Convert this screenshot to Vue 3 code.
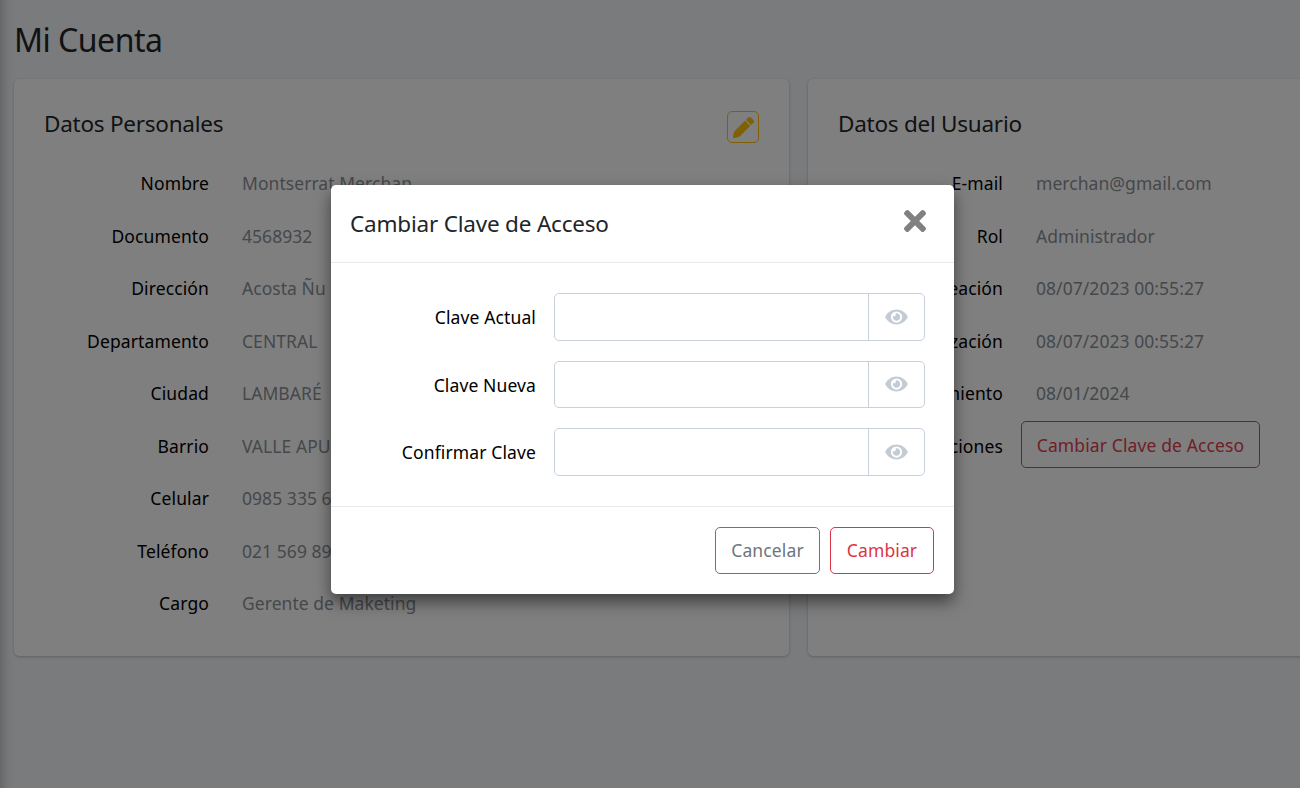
<script setup>
const left = [
  ['Nombre', 'Montserrat Merchan'],
  ['Documento', '4568932'],
  ['Dirección', 'Acosta Ñu c/ Cerro Corá'],
  ['Departamento', 'CENTRAL'],
  ['Ciudad', 'LAMBARÉ'],
  ['Barrio', 'VALLE APU\'A'],
  ['Celular', '0985 335 689'],
  ['Teléfono', '021 569 890'],
  ['Cargo', 'Gerente de Maketing'],
]
const right = [
  ['E-mail', 'merchan@gmail.com'],
  ['Rol', 'Administrador'],
  ['Fecha de Creación', '08/07/2023 00:55:27'],
  ['Última Actualización', '08/07/2023 00:55:27'],
  ['Fecha de Vencimiento', '08/01/2024'],
]
const fields = ['Clave Actual', 'Clave Nueva', 'Confirmar Clave']
const eye = 'M572.52 241.4C518.29 135.59 410.93 64 288 64S57.68 135.64 3.48 241.41a32.35 32.35 0 0 0 0 29.19C57.71 376.41 165.07 448 288 448s230.32-71.64 284.52-177.41a32.35 32.35 0 0 0 0-29.19zM288 400a144 144 0 1 1 144-144 143.93 143.93 0 0 1-144 144zm0-240a95.31 95.31 0 0 0-25.31 3.79 47.85 47.85 0 0 1-66.9 66.9A95.78 95.78 0 1 0 288 160z'
</script>

<template>
  <div class="page">
    <h1 class="title">Mi Cuenta</h1>
    <div class="cards">
      <section class="card">
        <div class="card-head">
          <h2>Datos Personales</h2>
          <button class="edit" type="button" aria-label="Editar">
            <svg viewBox="0 0 512 512" width="21" height="21"><path fill="currentColor" d="M497.9 142.1l-46.1 46.1c-4.7 4.7-12.3 4.7-17 0l-111-111c-4.7-4.7-4.7-12.3 0-17l46.1-46.1c18.7-18.7 49.1-18.7 67.9 0l60.1 60.1c18.8 18.7 18.8 49.1 0 67.9zM284.2 99.8L21.6 362.4.4 483.9c-2.9 16.4 11.4 30.6 27.8 27.8l121.5-21.3 262.6-262.6c4.7-4.7 4.7-12.3 0-17l-111-111c-4.8-4.7-12.4-4.7-17.1 0z"/></svg>
          </button>
        </div>
        <dl class="rows">
          <div v-for="r in left" :key="r[0]" class="row">
            <dt>{{ r[0] }}</dt>
            <dd>{{ r[1] }}</dd>
          </div>
        </dl>
      </section>
      <section class="card">
        <div class="card-head">
          <h2>Datos del Usuario</h2>
        </div>
        <dl class="rows">
          <div v-for="r in right" :key="r[0]" class="row">
            <dt>{{ r[0] }}</dt>
            <dd>{{ r[1] }}</dd>
          </div>
          <div class="row row-btn">
            <dt>Acciones</dt>
            <dd><button class="btn btn-red change" type="button">Cambiar Clave de Acceso</button></dd>
          </div>
        </dl>
      </section>
    </div>
    <div class="backdrop"></div>
    <div class="modal">
      <header class="m-head">
        <h3>Cambiar Clave de Acceso</h3>
        <svg class="close" viewBox="0 80 352 352" width="22" height="22"><path fill="currentColor" d="M242.72 256l100.07-100.07c12.28-12.28 12.28-32.19 0-44.48l-22.24-22.24c-12.28-12.28-32.19-12.28-44.48 0L176 189.28 75.93 89.21c-12.28-12.28-32.19-12.28-44.48 0L9.21 111.45c-12.28 12.28-12.28 32.19 0 44.48L109.28 256 9.21 356.07c-12.28 12.28-12.28 32.19 0 44.48l22.24 22.24c12.28 12.28 32.2 12.28 44.48 0L176 322.72l100.07 100.07c12.28 12.28 32.2 12.28 44.48 0l22.24-22.24c12.28-12.28 12.28-32.19 0-44.48L242.72 256z"/></svg>
      </header>
      <div class="m-body">
        <div v-for="f in fields" :key="f" class="field">
          <label>{{ f }}</label>
          <div class="group">
            <input type="password" />
            <span class="addon">
              <svg viewBox="0 0 576 512" width="23" height="20"><path fill="currentColor" :d="eye"/></svg>
            </span>
          </div>
        </div>
      </div>
      <footer class="m-foot">
        <button class="btn btn-grey" type="button">Cancelar</button>
        <button class="btn btn-red solid" type="button">Cambiar</button>
      </footer>
    </div>
  </div>
</template>

<style>
html, body { margin: 0; height: 100%; overflow: hidden; }
</style>

<style scoped>
* { box-sizing: border-box; }
.page {
  position: relative;
  height: 788px;
  width: 1300px;
  overflow: hidden;
  background: #f4f6f9;
  padding: 14px 0 0 14px;
  font-family: "Noto Sans", sans-serif;
  font-size: 17.5px;
  letter-spacing: 0.12px;
  line-height: 27px;
  color: #212529;
  box-shadow: inset 14px 0 12px -12px rgba(0, 0, 0, .25);
}
.title {
  margin: 0 0 14px;
  font-size: 32px;
  font-weight: 400;
  line-height: 51px;
  letter-spacing: -0.5px;
}
.cards { display: flex; gap: 19px; width: 1569px; }
.card {
  flex: 0 0 775px;
  height: 577px;
  padding: 30px;
  background: #fff;
  border-radius: 5px;
  box-shadow: 0 0 1px rgba(0,0,0,.125), 0 1px 3px rgba(0,0,0,.2);
}
.card-head {
  display: flex;
  justify-content: space-between;
  align-items: center;
  height: 32px;
  margin: 2px 0 14px;
}
.card-head h2 { margin: 0 0 6px; font-size: 22.5px; font-weight: 400; line-height: 32px; letter-spacing: -0.25px; }
.edit {
  width: 32px;
  height: 32px;
  padding: 0;
  display: flex;
  align-items: center;
  justify-content: center;
  background: transparent;
  border: 1px solid #ffc107;
  border-radius: 5px;
  color: #ffc107;
}
.rows { margin: 0; padding-top: .25px; }
.row { display: flex; height: 52.5px; align-items: center; }
.row dt { width: 165px; text-align: right; white-space: nowrap; direction: rtl; color: #000; font-weight: 400; }
.row dd { margin: 0 0 0 33px; color: #8b9196; white-space: nowrap; letter-spacing: 0.05px; }
.row-btn dd { margin-left: 18px; display: flex; padding-bottom: 3px; }
.btn {
  height: 47px;
  padding: 0 15px;
  background: transparent;
  border: 1px solid;
  border-radius: 5px;
  font: inherit;
  letter-spacing: inherit;
}
.btn-red { color: #dc3545; border-color: #dc3545; }
.btn-grey { color: #6c757d; border-color: #6c757d; }
.change {
  width: 239px;
  padding: 2px 0 0;
  letter-spacing: 0.12px;
  border-color: #e8404f;
  color: #e0404e;
}
.backdrop { position: absolute; inset: 0; background: rgba(0, 0, 0, .5); }
.modal {
  position: absolute;
  left: 331px;
  top: 185px;
  width: 623px;
  height: 409px;
  background: #fff;
  border-radius: 5px;
  box-shadow: 0 8px 16px rgba(0, 0, 0, .5);
  display: flex;
  flex-direction: column;
}
.m-head {
  height: 78px;
  flex: none;
  padding: 0 28px 0 19px;
  display: flex;
  align-items: center;
  justify-content: space-between;
  border-bottom: 1px solid #e9ecef;
}
.m-head h3 { margin: 0; font-size: 22.5px; font-weight: 400; line-height: 36px; letter-spacing: -0.2px; }
.close { color: #808080; margin-top: -5px; }
.m-body {
  flex: 1;
  padding: 30px 29px 0 0;
  display: flex;
  flex-direction: column;
  gap: 20px;
}
.field { display: flex; align-items: center; height: 47.5px; }
.field label { width: 205px; padding-top: 2px; text-align: right; color: #000; }
.group {
  margin-left: 18px;
  flex: 1;
  height: 100%;
  display: flex;
  border: 1px solid #c8d0dc;
  border-radius: 5px;
}
.group input { flex: 1; min-width: 0; border: 0; background: transparent; outline: 0; padding: 0; }
.addon {
  flex: 0 0 56px;
  border-left: 1px solid #c8d0dc;
  display: flex;
  align-items: center;
  justify-content: center;
  color: #c3cbd5;
}
.m-foot {
  flex: none;
  height: 88px;
  padding: 20px 20px 0 0;
  display: flex;
  justify-content: flex-end;
  gap: 10px;
  border-top: 1px solid #e9ecef;
}
.m-foot .btn { width: 105px; padding: 0; }
.m-foot .solid { width: 104px; }
</style>
